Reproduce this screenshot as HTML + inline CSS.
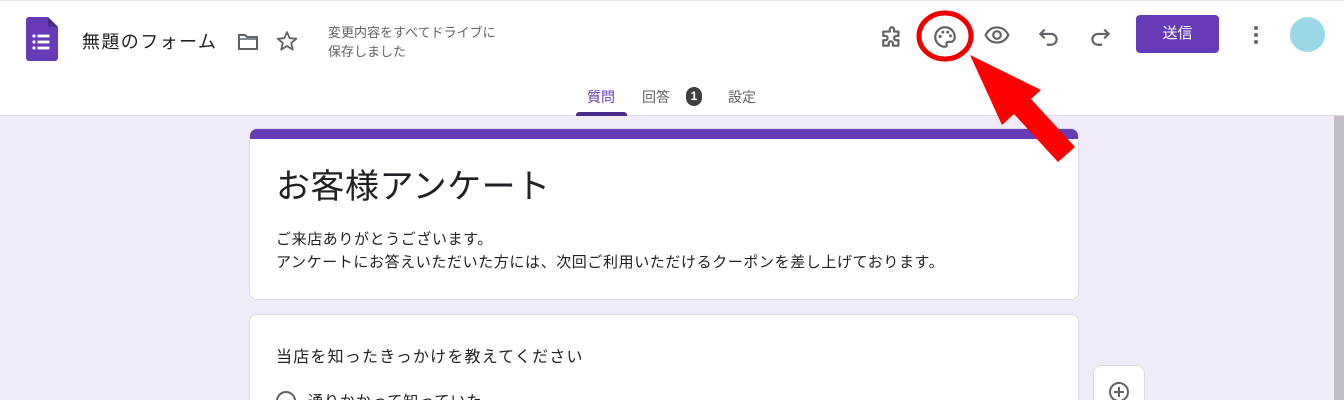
<!DOCTYPE html>
<html><head><meta charset="utf-8"><style>
*{margin:0;padding:0;box-sizing:border-box}
html,body{width:1344px;height:400px;overflow:hidden}
body{background:#f0ebf8;font-family:"Liberation Sans","Noto Sans CJK JP",sans-serif;position:relative;color:#202124}
.hdr{position:absolute;left:0;top:0;width:1344px;height:116px;background:#fff;border-bottom:1px solid #dadce0;border-top:1px solid #e8e8e8}
.abs{position:absolute}
.card{position:absolute;background:#fff;border-radius:8px;border:1px solid #dadce0}
.cut{border-bottom:none;border-radius:8px 8px 0 0;overflow:hidden}
</style></head><body>
<div class="hdr">
 <svg class="abs" style="left:26px;top:16px" width="32" height="44" viewBox="0 0 32 44"><path d="M3 0H22L32 10V41a3 3 0 0 1-3 3H3a3 3 0 0 1-3-3V3a3 3 0 0 1 3-3z" fill="#673ab7"/><path d="M22 0L32 10H24a2 2 0 0 1-2-2z" fill="#4a2a8a"/><g fill="#fff"><circle cx="8" cy="19" r="1.6"/><circle cx="8" cy="25" r="1.6"/><circle cx="8" cy="31" r="1.6"/><rect x="11.5" y="17.6" width="12" height="2.8"/><rect x="11.5" y="23.6" width="12" height="2.8"/><rect x="11.5" y="29.6" width="12" height="2.8"/></g></svg>
 <div class="abs" style="left:82px;top:27px;font-size:18px;letter-spacing:1.4px;color:#202124">無題のフォーム</div>
 <svg class="abs" style="left:236px;top:29px" width="24" height="24" viewBox="0 0 24 24"><path d="M3 5h6l2 2h10v12H3z" fill="none" stroke="#5f6368" stroke-width="2"/><path d="M3 9h18" stroke="#5f6368" stroke-width="1.5"/></svg>
 <svg class="abs" style="left:275px;top:28px" width="24" height="24" viewBox="0 0 24 24"><path d="M12 3l2.6 6.2 6.7.5-5.1 4.4 1.6 6.5L12 17l-5.8 3.6 1.6-6.5-5.1-4.4 6.7-.5z" fill="none" stroke="#5f6368" stroke-width="1.8" stroke-linejoin="round"/></svg>
 <div class="abs" style="left:328px;top:22px;font-size:13px;line-height:19px;color:#5f6368">変更内容をすべてドライブに<br>保存しました</div>
 <svg class="abs" style="left:880px;top:23px" width="26" height="26" viewBox="0 0 24 24"><path d="M5 7h4V5a2 2 0 0 1 4 0v2h4v4h-2a2 2 0 0 0 0 4h2v5h-5v-2a2 2 0 0 0-4 0v2H3v-5h2a2 2 0 0 0 0-4H3V7z" fill="none" stroke="#5f6368" stroke-width="2" stroke-linejoin="round"/></svg>
 <svg class="abs" style="left:932px;top:23px" width="26" height="26" viewBox="0 0 24 24"><path d="M12 3a9 9 0 0 0 0 18c1.5 0 2-1 1.5-2-.6-1.2.2-2.5 1.5-2.5H17a4 4 0 0 0 4-4C21 7 17 3 12 3z" fill="none" stroke="#5f6368" stroke-width="2"/><circle cx="7.5" cy="11.5" r="1.4" fill="#5f6368"/><circle cx="10" cy="7.5" r="1.4" fill="#5f6368"/><circle cx="14.5" cy="7.5" r="1.4" fill="#5f6368"/><circle cx="17" cy="11" r="1.4" fill="#5f6368"/></svg>
 <svg class="abs" style="left:984px;top:21px" width="26" height="26" viewBox="0 0 24 24"><path d="M1.5 12C4 7 8 5 12 5s8 2 10.5 7C20 17 16 19 12 19s-8-2-10.5-7z" fill="none" stroke="#5f6368" stroke-width="2"/><circle cx="12" cy="12" r="3.5" fill="none" stroke="#5f6368" stroke-width="2"/></svg>
 <svg class="abs" style="left:1036px;top:21px" width="26" height="26" viewBox="0 0 24 24"><path d="M8 7L4 11l4 4M4 11h10a5 5 0 0 1 0 10h-4" fill="none" stroke="#5f6368" stroke-width="2"/></svg>
 <svg class="abs" style="left:1087px;top:21px" width="26" height="26" viewBox="0 0 24 24"><path d="M16 7l4 4-4 4M20 11H10a5 5 0 0 0 0 10h4" fill="none" stroke="#5f6368" stroke-width="2"/></svg>
 <div class="abs" style="left:1136px;top:14px;width:83px;height:38px;background:#673ab7;border-radius:4px;color:#fff;font-size:15px;line-height:38px;text-align:center">送信</div>
 <svg class="abs" style="left:1244px;top:22px" width="24" height="24" viewBox="0 0 24 24"><g fill="#5f6368"><circle cx="12" cy="5" r="2"/><circle cx="12" cy="12" r="2"/><circle cx="12" cy="19" r="2"/></g></svg>
 <div class="abs" style="left:1290px;top:16px;width:35px;height:35px;border-radius:50%;background:#9ad8e8"></div>
 <div class="abs" style="left:587px;top:86px;font-size:14px;color:#673ab7">質問</div>
 <div class="abs" style="left:576px;top:111px;width:51px;height:4px;background:#4a2a8a;border-radius:3px 3px 0 0"></div>
 <div class="abs" style="left:642px;top:86px;font-size:14px;color:#5f6368">回答</div>
 <div class="abs" style="left:686px;top:86px;width:16px;height:19px;border-radius:8px;background:#3c4043;color:#fff;font-size:12px;font-weight:bold;text-align:center;line-height:19px">1</div>
 <div class="abs" style="left:728px;top:86px;font-size:14px;color:#5f6368">設定</div>
</div>
<div class="abs" style="left:1334px;top:116px;width:10px;height:284px;background:#c1bcc8"></div>
<div class="card" style="left:249px;top:128px;width:830px;height:172px;overflow:hidden">
 <div style="height:10px;background:#673ab7"></div>
 <div class="abs" style="left:26px;top:30px;font-size:34px;letter-spacing:0.5px;color:#202124">お客様アンケート</div>
 <div class="abs" style="left:26px;top:99px;font-size:15px;line-height:23px;letter-spacing:0.6px;color:#202124;white-space:nowrap">ご来店ありがとうございます。<br>アンケートにお答えいただいた方には、次回ご利用いただけるクーポンを差し上げております。</div>
</div>
<div class="card cut" style="left:249px;top:314px;width:830px;height:86px">
 <div class="abs" style="left:26px;top:28px;font-size:16px;letter-spacing:1.2px;white-space:nowrap">当店を知ったきっかけを教えてください</div>
 <div class="abs" style="left:26px;top:76px;width:20px;height:20px;border:2px solid #5f6368;border-radius:50%"></div>
 <div class="abs" style="left:58px;top:75px;font-size:15px;letter-spacing:1px;white-space:nowrap">通りかかって知っていた</div>
</div>
<div class="card cut" style="left:1093px;top:365px;width:52px;height:35px">
 <svg class="abs" style="left:13px;top:14px" width="24" height="24" viewBox="0 0 24 24"><circle cx="12" cy="12" r="9" fill="none" stroke="#5f6368" stroke-width="2"/><path d="M12 7v10M7 12h10" stroke="#5f6368" stroke-width="2"/></svg>
</div>
<svg class="abs" style="left:0;top:0" width="1344" height="400"><ellipse cx="945" cy="36" rx="26" ry="23" fill="none" stroke="#e00" stroke-width="5"/><polygon points="970,55 1041,90 1031,99 1075,147 1058,162 1014,114 1002,125" fill="#f00"/></svg>
</body></html>
